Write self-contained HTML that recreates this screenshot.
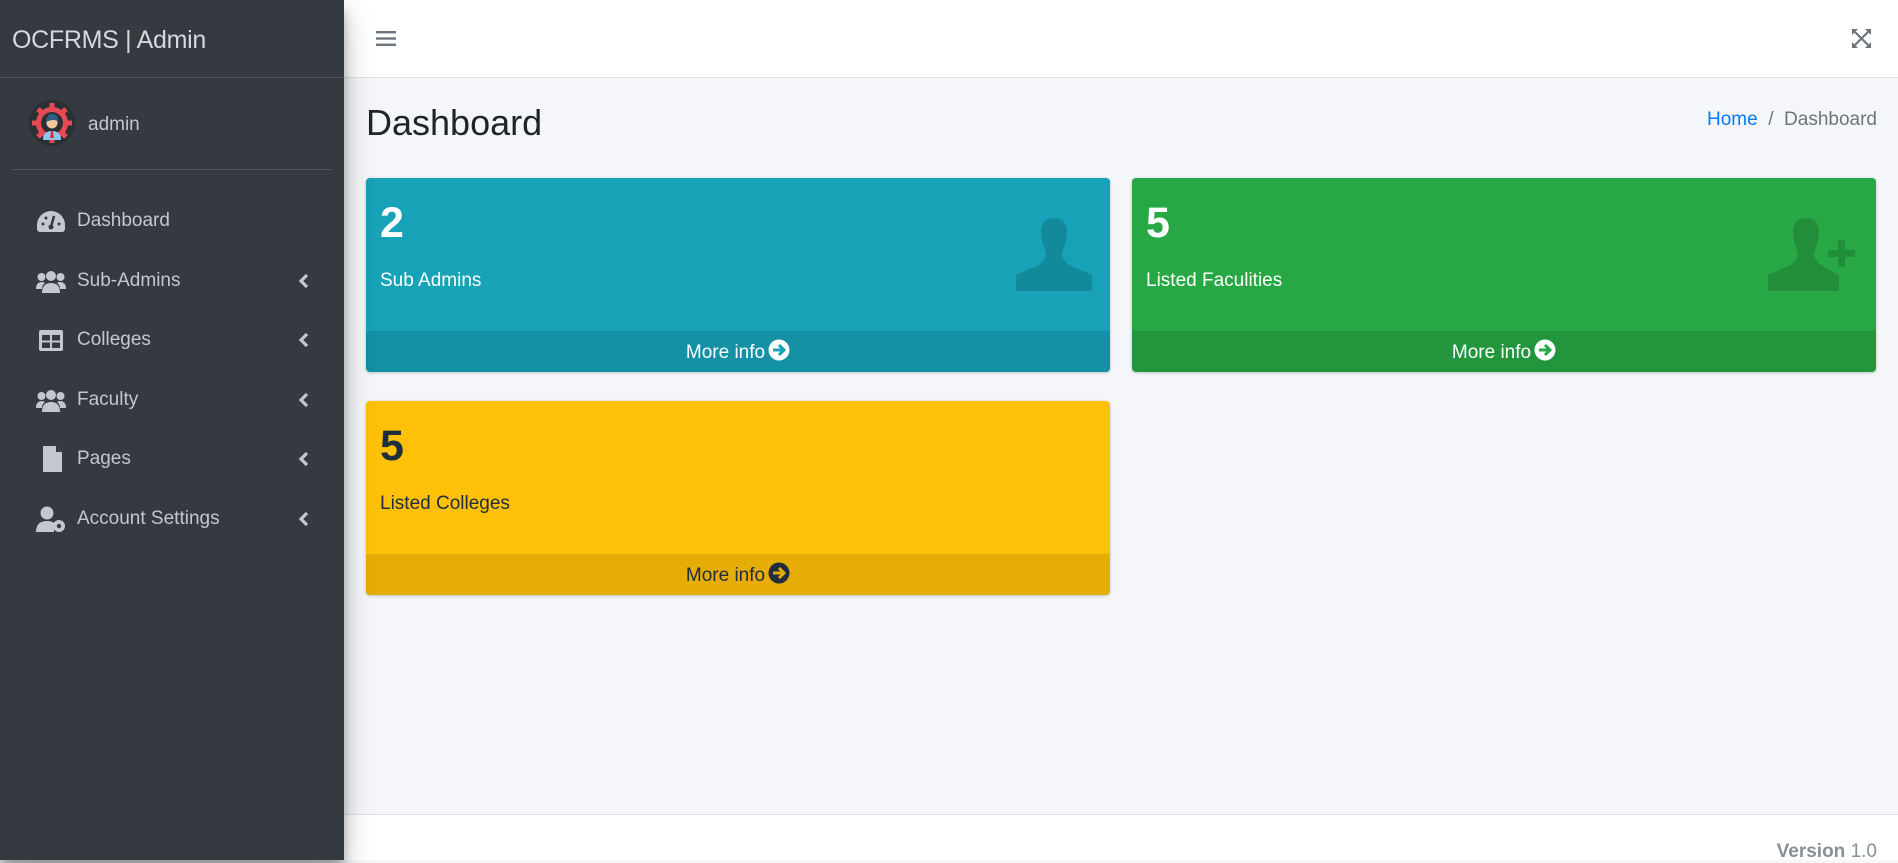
<!DOCTYPE html>
<html><head><meta charset="utf-8"><style>
*{box-sizing:border-box;margin:0;padding:0}
body{width:1898px;height:860px;overflow:hidden;background:#f4f6f9;font-family:"Liberation Sans",sans-serif;position:relative}
.sb{position:absolute;left:0;top:0;width:344px;height:860px;background:#343a40;box-shadow:0 14px 28px rgba(0,0,0,.25),0 10px 10px rgba(0,0,0,.22);z-index:2}
.brand{height:78px;border-bottom:1px solid #4b545c;color:#d5d8db;font-size:25px;font-weight:300;padding:26px 0 0 12px;letter-spacing:-0.3px}
.user{position:absolute;top:78px;left:12px;right:12px;height:92px;border-bottom:1px solid #4f5962}
.av{position:absolute;left:17px;top:22px;width:46px;height:46px;border-radius:50%;background:#2b3035}
.user .nm{position:absolute;left:76px;top:36px;color:#c2c7d0;font-size:19px}
.nav{position:absolute;top:193px;left:0;width:344px}
.it{position:relative;height:59.5px;color:#c2c7d0;font-size:19px}
.it .ic{position:absolute;left:36px;top:15px;width:30px;height:26px}
.it .tx{position:absolute;left:77px;top:17px}
.it .ch{position:absolute;left:298px;top:20px;width:12px;height:16px}
.top{position:absolute;left:344px;top:0;right:0;height:78px;background:#fff;border-bottom:1px solid #dee2e6}
.main{position:absolute;left:344px;top:78px;right:0}
h1{position:absolute;left:22px;top:24px;font-size:36px;font-weight:400;color:#212529}
.bc{position:absolute;right:21px;top:31px;font-size:19px;color:#6c757d}
.bc a{color:#007bff;text-decoration:none}
.box{position:absolute;width:744px;height:194px;border-radius:4px;box-shadow:0 0 1px rgba(0,0,0,.125),0 1px 3px rgba(0,0,0,.2);overflow:hidden;color:#fff}
.box .n{position:absolute;left:14px;top:21px;font-size:43px;font-weight:700}
.box .l{position:absolute;left:14px;top:92px;font-size:19px}
.box .f{position:absolute;left:0;right:0;bottom:0;height:41px;background:rgba(0,0,0,.1);text-align:center;font-size:19px;line-height:43px}
.box .f svg{vertical-align:-3px;margin-left:3px}
.box .ico{position:absolute;right:18px;top:37px}
.foot{position:absolute;left:344px;right:0;top:814px;height:46px;background:#fff;border-top:1px solid #dee2e6;color:#869099;font-size:19px}
</style></head><body>
<div class="sb">
<div class="brand">OCFRMS | Admin</div>
<div class="user"><div class="av"><svg width="46" height="46" viewBox="0 0 46 46"><g fill="#e84a55"><circle cx="23" cy="23" r="16"/><g stroke="#e84a55" stroke-width="5"><line x1="23" y1="3" x2="23" y2="43"/><line x1="3" y1="23" x2="43" y2="23"/><line x1="9" y1="9" x2="37" y2="37"/><line x1="37" y1="9" x2="9" y2="37"/></g></g><circle cx="23" cy="23" r="11" fill="#2b3035"/><path d="M14 40 q0-9 9-9 q9 0 9 9z" fill="#8cc8ef"/><circle cx="23" cy="23" r="5.5" fill="#f5c9a0"/><path d="M17 22 q0-8 6-8 q7 0 6 8 q-3-4-12 0z" fill="#2f5d80"/><path d="M22 31 h2 l1 7 h-4z" fill="#d33"/></svg></div><div class="nm">admin</div></div>
<div class="nav">
<div class="it"><svg class="ic" viewBox="0 0 30 26"><path d="M15 3A14 14 0 0 0 1 17v4a3 3 0 0 0 3 3h22a3 3 0 0 0 3-3v-4A14 14 0 0 0 15 3z" fill="#c2c7d0"/><path d="M15 19l3-11" stroke="#343a40" stroke-width="2.5"/><circle cx="15" cy="19" r="2.5" fill="#343a40"/><g fill="#343a40"><circle cx="7" cy="16" r="1.5"/><circle cx="10" cy="10" r="1.5"/><circle cx="23" cy="16" r="1.5"/></g></svg><span class="tx">Dashboard</span></div>
<div class="it"><svg class="ic" viewBox="0 0 30 26"><g fill="#c2c7d0"><circle cx="15" cy="8" r="5"/><circle cx="5.5" cy="9" r="4"/><circle cx="24.5" cy="9" r="4"/><path d="M6 25q0-10 9-10t9 10z"/><path d="M0 21q0-7 6-7 2 0 3 1-3 2-3 6z"/><path d="M30 21q0-7-6-7-2 0-3 1 3 2 3 6z"/></g></svg><span class="tx">Sub-Admins</span><svg class="ch" viewBox="0 0 12 16"><path d="M9 2L3 8l6 6" stroke="#c2c7d0" stroke-width="3.2" fill="none"/></svg></div>
<div class="it"><svg class="ic" viewBox="0 0 30 26"><rect x="3" y="3" width="24" height="21" rx="2" fill="#c2c7d0"/><rect x="6" y="8" width="8" height="5.5" fill="#343a40"/><rect x="16" y="8" width="8" height="5.5" fill="#343a40"/><rect x="6" y="15.5" width="8" height="5.5" fill="#343a40"/><rect x="16" y="15.5" width="8" height="5.5" fill="#343a40"/></svg><span class="tx">Colleges</span><svg class="ch" viewBox="0 0 12 16"><path d="M9 2L3 8l6 6" stroke="#c2c7d0" stroke-width="3.2" fill="none"/></svg></div>
<div class="it"><svg class="ic" viewBox="0 0 30 26"><g fill="#c2c7d0"><circle cx="15" cy="8" r="5"/><circle cx="5.5" cy="9" r="4"/><circle cx="24.5" cy="9" r="4"/><path d="M6 25q0-10 9-10t9 10z"/><path d="M0 21q0-7 6-7 2 0 3 1-3 2-3 6z"/><path d="M30 21q0-7-6-7-2 0-3 1 3 2 3 6z"/></g></svg><span class="tx">Faculty</span><svg class="ch" viewBox="0 0 12 16"><path d="M9 2L3 8l6 6" stroke="#c2c7d0" stroke-width="3.2" fill="none"/></svg></div>
<div class="it"><svg class="ic" viewBox="0 0 30 26"><path d="M7 0h13l6 6v20H7z" fill="#c2c7d0"/><path d="M20 0v6h6" fill="#343a40"/></svg><span class="tx">Pages</span><svg class="ch" viewBox="0 0 12 16"><path d="M9 2L3 8l6 6" stroke="#c2c7d0" stroke-width="3.2" fill="none"/></svg></div>
<div class="it"><svg class="ic" viewBox="0 0 30 26"><g fill="#c2c7d0"><circle cx="11" cy="7" r="6.5"/><path d="M0 26q0-11 11-11 5 0 7 2v9z"/><circle cx="23" cy="20" r="6"/></g><circle cx="23" cy="20" r="2.2" fill="#343a40"/></svg><span class="tx">Account Settings</span><svg class="ch" viewBox="0 0 12 16"><path d="M9 2L3 8l6 6" stroke="#c2c7d0" stroke-width="3.2" fill="none"/></svg></div>
</div></div>
<div class="top"><svg style="position:absolute;left:32px;top:30px" width="20" height="17" viewBox="0 0 20 17"><g fill="#6c757d"><rect y="1" width="20" height="2.4"/><rect y="7.3" width="20" height="2.4"/><rect y="13.6" width="20" height="2.4"/></g></svg>
<svg style="position:absolute;right:27px;top:29px" width="19" height="19" viewBox="0 0 19 19"><g stroke="#6c757d" stroke-width="2.2" fill="none"><path d="M3 3l13 13M16 3L3 16"/></g><g fill="#6c757d"><path d="M0 0h6L0 6z"/><path d="M19 0h-6l6 6z"/><path d="M0 19h6L0 13z"/><path d="M19 19h-6l6-6z"/></g></svg></div>
<div class="main">
<h1>Dashboard</h1>
<div class="bc"><a>Home</a> &nbsp;/&nbsp; Dashboard</div>
<div class="box" style="left:22px;top:100px;background:#17a2b8"><div class="n">2</div><div class="l">Sub Admins</div><svg class="ico" width="76" height="76" viewBox="0 0 76 76"><path d="M38 3c-10 0-13 7-13 15 0 7 3 14 5 20 0 5-3 8-7 12L0 60v16h76V60L53 50c-4-4-7-7-7-12 2-6 5-13 5-20 0-8-3-15-13-15z" fill="rgba(0,0,0,.15)"/></svg><div class="f">More info<svg width="22" height="22" viewBox="0 0 22 22"><circle cx="11" cy="11" r="10.5" fill="#fff"/><path d="M5 11h10M11 6l5 5-5 5" stroke="#17a2b8" stroke-width="3" fill="none"/></svg></div></div>
<div class="box" style="left:788px;top:100px;background:#28a745"><div class="n">5</div><div class="l">Listed Faculities</div><svg class="ico" width="90" height="76" viewBox="0 0 90 76"><path d="M38 3c-10 0-13 7-13 15 0 7 3 14 5 20 0 5-3 8-7 12L0 60v16h71V60L53 50c-4-4-7-7-7-12 2-6 5-13 5-20 0-8-3-15-13-15z" fill="rgba(0,0,0,.15)"/><path d="M70 25h7v10h10v7H77v10h-7V42H60v-7h10z" fill="rgba(0,0,0,.15)"/></svg><div class="f">More info<svg width="22" height="22" viewBox="0 0 22 22"><circle cx="11" cy="11" r="10.5" fill="#fff"/><path d="M5 11h10M11 6l5 5-5 5" stroke="#28a745" stroke-width="3" fill="none"/></svg></div></div>
<div class="box" style="left:22px;top:323px;background:#ffc107;color:#1f2d3d"><div class="n">5</div><div class="l">Listed Colleges</div><div class="f">More info<svg width="22" height="22" viewBox="0 0 22 22"><circle cx="11" cy="11" r="10.5" fill="#1f2d3d"/><path d="M5 11h10M11 6l5 5-5 5" stroke="#e3ad06" stroke-width="3" fill="none"/></svg></div></div>
</div>
<div class="foot"><span style="position:absolute;right:21px;top:26px"><b>Version</b> 1.0</span></div>
</body></html>
